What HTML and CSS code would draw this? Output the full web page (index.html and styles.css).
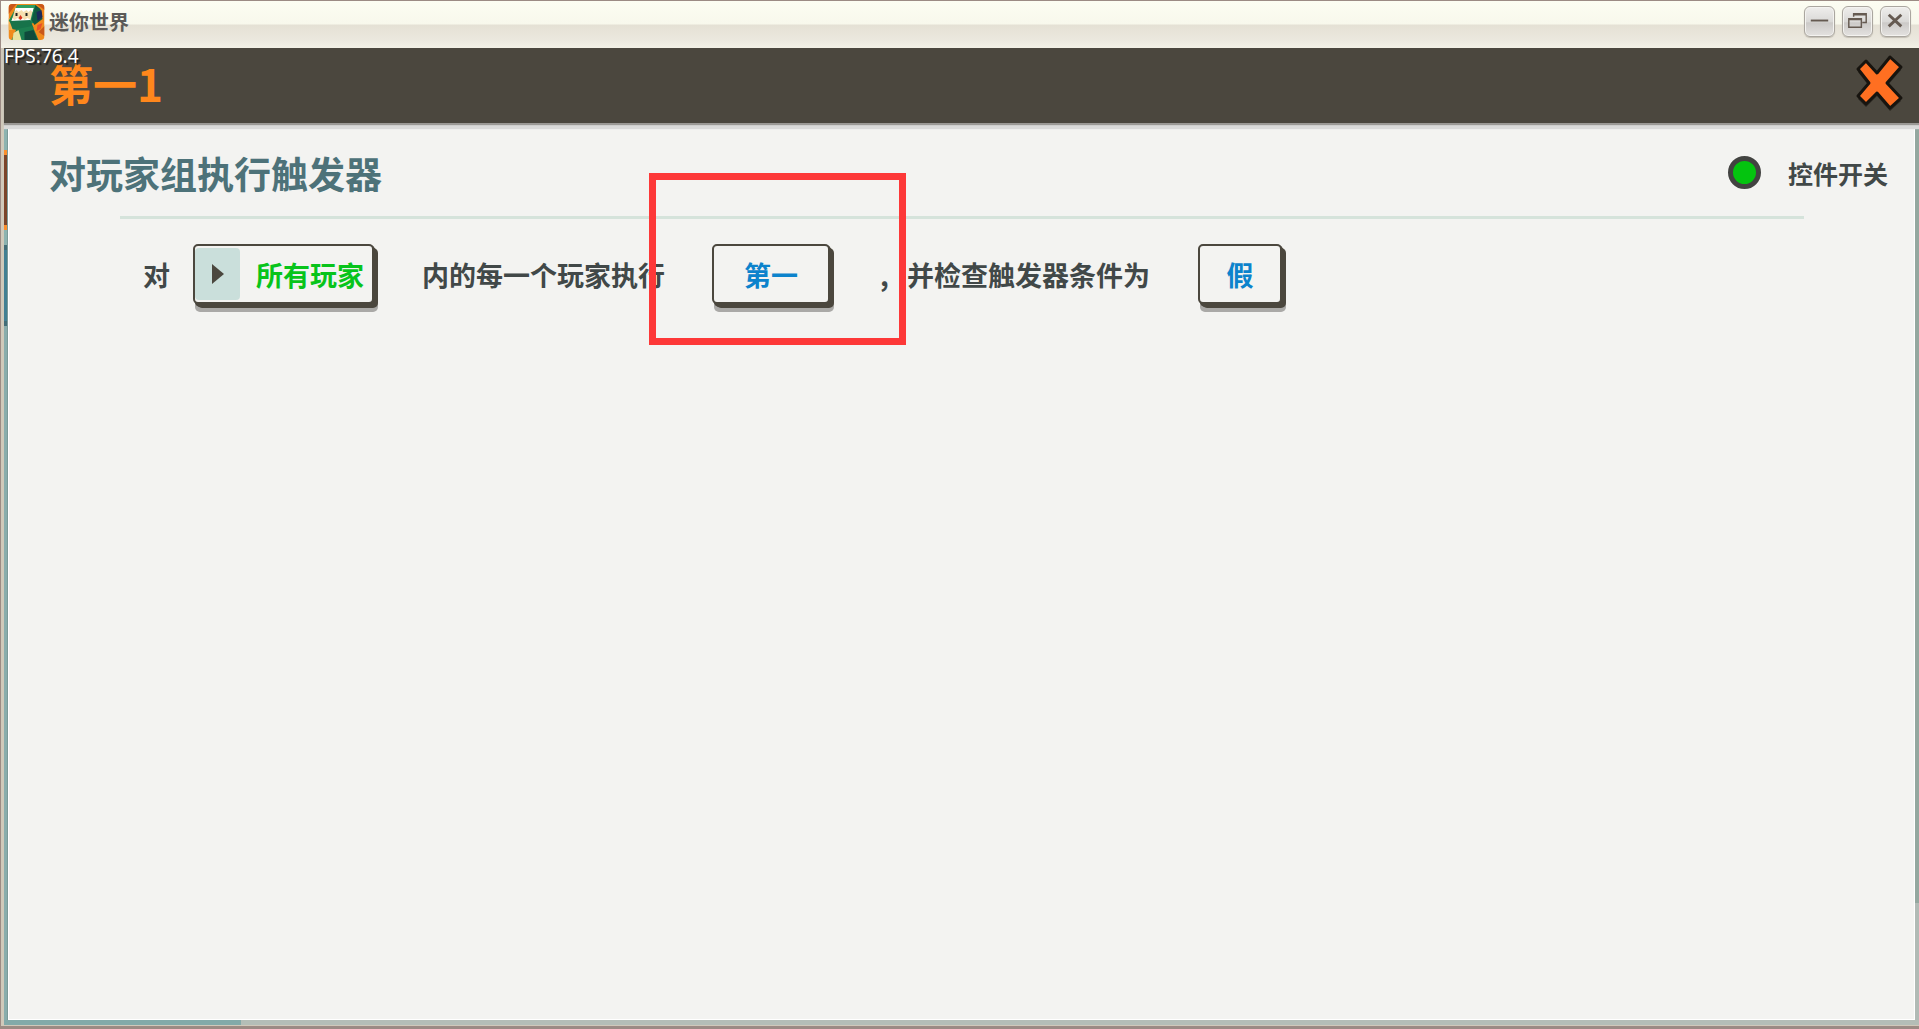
FILE: index.html
```
<!DOCTYPE html>
<html lang="zh-CN">
<head>
  <meta charset="UTF-8">
  <meta name="viewport" content="width=device-width, initial-scale=1.0">
  <title>迷你世界</title>
  <link rel="stylesheet" href="styles.css">
</head>
<body>

  <header class="titlebar">
    <svg class="app-icon" viewBox="0 0 36 36" aria-hidden="true">
      <defs>
        <clipPath id="iconShape"><rect width="36" height="36" rx="4"/></clipPath>
      </defs>
      <g clip-path="url(#iconShape)">
        <rect width="36" height="36" fill="#f08a1c"/>
        <path d="M0 0h8L0 10zM28 0h8v6zM30 28l6-6v10z" fill="#c9571a"/>
        <path d="M0 14h4v12H0z" fill="#f3ae4a"/>
        <path d="M9 1L27 1l3 5-4 13L9 21 0 17z" fill="#1d8a52"/>
        <path d="M9 1L27 1l-2 4L7 5z" fill="#2f9e60"/>
        <path d="M27 1l5 4 2 10-8 6-3-5z" fill="#0f5a41"/>
        <path d="M28 8l5-2 1 7-5 4z" fill="#1b2b58"/>
        <path d="M7 4l18 0-3 12-19 1z" fill="#f6dfb0"/>
        <path d="M7 4h18l-1 4-2-2-2 2-2-2-3 2-2-2-3 2-2-2-2 2z" fill="#fff"/>
        <path d="M3 17l1-3 2 2 3-2 2 2 3-2 2 2 3-2 3 2v1z" fill="#fff"/>
        <rect x="7" y="9" width="2" height="3" fill="#222"/>
        <rect x="17" y="9" width="2" height="3" fill="#222"/>
        <path d="M10 14l2-3 2 3-2 2z" fill="#d9301d"/>
        <path d="M1 17l21-1 3 8-8 4L4 25z" fill="#17734a"/>
        <path d="M8 25l16-3 6 14H3z" fill="#1c7f50"/>
        <path d="M5 29l5-3 3 10H4z" fill="#e8e3a0"/>
        <path d="M16 28l9-2 4 10H16z" fill="#0f4b3c"/>
        <path d="M29 21l5-2-2 6-4 2z" fill="#e8502a"/>
      </g>
    </svg>
    <span class="app-name">迷你世界</span>
    <div class="window-buttons">
      <button type="button" aria-label="最小化">
        <svg viewBox="0 0 30 30"><path d="M6 14h18" stroke-width="2"/></svg>
      </button>
      <button type="button" aria-label="还原">
        <svg viewBox="0 0 30 30"><path d="M11 10V7h13v9h-4M11 8h13M6 12h13v9H6zM6 13h13" stroke-width="1.500"/></svg>
      </button>
      <button type="button" aria-label="关闭">
        <svg viewBox="0 0 30 30"><path d="M8 8l13 12M21 8L8 20" stroke-width="3"/></svg>
      </button>
    </div>
  </header>

  <div class="game">
    <div class="game-header">
      <span class="fps">FPS:76.4</span>
      <h1>第一1</h1>
      <button type="button" class="close" aria-label="关闭">
        <svg viewBox="0 0 50 56">
          <path d="M12 6L23 18L36 2L47 12L33 28L47 43L36 53L23 38L12 49L4 41L15 28L4 14Z" transform="translate(0 3)" fill="#2b2822"/>
          <path d="M12 6L23 18L36 2L47 12L33 28L47 43L36 53L23 38L12 49L4 41L15 28L4 14Z" fill="#ff6f21" stroke="#17140f" stroke-width="3" stroke-linejoin="round"/>
        </svg>
      </button>
    </div>

    <div class="stage">
      <div class="edge-left"></div>
      <main class="panel">
        <div class="panel-head">
          <h2>对玩家组执行触发器</h2>
          <label class="switch">
            <input type="checkbox" checked>
            控件开关
          </label>
        </div>
        <div class="sentence">
          <span>对</span>
          <button type="button" class="param group">
            <span class="arrow"><svg viewBox="0 0 12 20"><path d="M0 0l12 10L0 20z"/></svg></span>
            <span class="group-name">所有玩家</span>
          </button>
          <span>内的每一个玩家执行</span>
          <button type="button" class="param trigger">第一</button>
          <span><span class="comma">,</span>并检查触发器条件为</span>
          <button type="button" class="param bool">假</button>
        </div>
      </main>
      <div class="edge-right"></div>
    </div>
    <div class="edge-bottom"></div>
  </div>

  <div class="marker"></div>

</body>
</html>
```

FILE: styles.css
```
* {
  box-sizing: border-box;
}

body {
  position: relative;
  display: flex;
  flex-direction: column;
  min-height: 100vh;
  margin: 0;
  border-top: 1px solid #9c8b84;
  border-bottom: 3px solid #9c8b84;
  border-left: 1px solid #9c8b84;
  background-color: #d0c9ba;
  color: #414848;
  font-family: "Noto Sans CJK SC", sans-serif;
}

button {
  padding: 0;
  border: 0;
  background: none;
  color: inherit;
  font: inherit;
}

svg {
  display: block;
}

/* window title bar */
.titlebar {
  display: flex;
  align-items: center;
  height: 47px;
  padding: 0 8px 6px 7px;
  background: linear-gradient(#fcfdf2 0%, #f8f8ec 48%, #e5e1d5 52%, #ece9df 85%, #f3f1e6 100%);
}

.app-icon {
  width: 37px;
  height: 36px;
}

.app-name {
  flex: 1;
  margin-left: 4px;
  color: #5c5a57;
  font-size: 20px;
  font-weight: 700;
}

.window-buttons {
  display: flex;
  gap: 7px;
}

.window-buttons button {
  width: 31px;
  height: 31px;
  border: 1px solid #aaa69f;
  border-radius: 6px;
  background: linear-gradient(#efeeec, #dad9d7 50%, #cccac8 55%, #e4e2e0);
  box-shadow: inset 0 0 0 1px #f4f3f0, 0 1px 1px #c4bfb4;
}

.window-buttons path {
  fill: none;
  stroke: #655a51;
}

/* game screen */
.game {
  display: flex;
  flex: 1;
  flex-direction: column;
  padding: 0 0 1px 3px;
}

.game-header {
  position: relative;
  z-index: 1;
  display: flex;
  align-items: center;
  justify-content: space-between;
  height: 75px;
  padding: 0 15px 5px 45px;
  background-color: #4b473e;
  box-shadow: 0 2px 1px #9b9995, 0 6px 1px #dadad9;
}

.fps {
  position: absolute;
  top: -4px;
  left: 0;
  color: #fff;
  font-family: "Noto Sans", sans-serif;
  font-size: 19px;
  line-height: 24px;
  text-shadow: 2px 2px 1px #222;
}

h1 {
  margin: 0;
  color: #ff871c;
  font-size: 44px;
  font-weight: 700;
  line-height: 70px;
}

.close svg {
  width: 50px;
  height: 56px;
  overflow: visible;
}

.stage {
  display: flex;
  flex: 1;
}

.edge-left {
  width: 4px;
  box-shadow: inset -1px 0 0 #7b9a98;
  background: linear-gradient(
    #8db3b0 27px,
    #fb8f2c 27px, #fb8f2c 32px,
    #7b4429 32px, #7b4429 102px,
    #fb8f2c 102px, #fb8f2c 107px,
    #8db3b0 107px, #8db3b0 122px,
    #426d78 122px, #426d78 127px,
    #428093 127px, #428093 198px,
    #426d78 198px, #426d78 203px,
    #89adac 203px
  );
}

.edge-right {
  width: 4px;
  background: linear-gradient(#94a79f 87%, #b1bab5 87%);
}

.edge-bottom {
  height: 5px;
  background: linear-gradient(90deg, #82aaa9 237px, #b4beb7 237px);
}

.panel {
  flex: 1;
  border: 1px solid #fff;
  background-color: #f3f3f1;
}

.panel-head {
  display: flex;
  align-items: center;
  justify-content: space-between;
  height: 92px;
  padding: 5px 26px 0 40px;
}

h2 {
  margin: 0;
  color: #4d7279;
  font-size: 37px;
  font-weight: 700;
  line-height: 56px;
}

.switch {
  display: flex;
  align-items: center;
  gap: 27px;
  font-size: 25px;
  font-weight: 700;
}

.switch input {
  width: 33px;
  height: 33px;
  margin: 0;
  border: 5px solid #424341;
  border-radius: 50%;
  background-color: #f3f3f1;
  appearance: none;
}

.switch input:checked {
  background-color: #04c40f;
}

/* trigger sentence */
.sentence {
  display: flex;
  align-items: center;
  margin: 0 110px 0 111px;
  padding: 25px 0 0 23px;
  border-top: 3px solid #d5e3db;
  font-size: 27px;
  font-weight: 700;
  white-space: nowrap;
}

.param {
  display: flex;
  align-items: center;
  justify-content: center;
  height: 60px;
  border: 2px solid #4b473e;
  border-radius: 5px;
  background-color: #f3f3f1;
  box-shadow: 1px 1px 0 #4b473e, 2px 3px 0 #4b473e, 4px 4px 0 #4b473e, 2px 8px 0 #aaa9a7, 4px 8px 0 #aaa9a7;
  color: #0c83cc;
}

.group {
  justify-content: flex-start;
  width: 181px;
  margin: 0 48px 0 23px;
  color: #08c41b;
}

.arrow {
  display: flex;
  align-items: center;
  justify-content: center;
  width: 45px;
  height: 52px;
  border-radius: 4px;
  background-color: #cadfdb;
}

.arrow svg {
  width: 12px;
  height: 20px;
  fill: #4b473e;
}

.group-name {
  margin-left: 16px;
}

.trigger {
  width: 118px;
  margin: 0 50px 0 47px;
}

.comma {
  display: inline-block;
  width: 27px;
}

.bool {
  width: 84px;
  margin-left: 48px;
}

/* highlight drawn over the screen */
.marker {
  position: absolute;
  top: 172px;
  left: 648px;
  width: 257px;
  height: 172px;
  border: 7px solid #fd3838;
  pointer-events: none;
}
```
